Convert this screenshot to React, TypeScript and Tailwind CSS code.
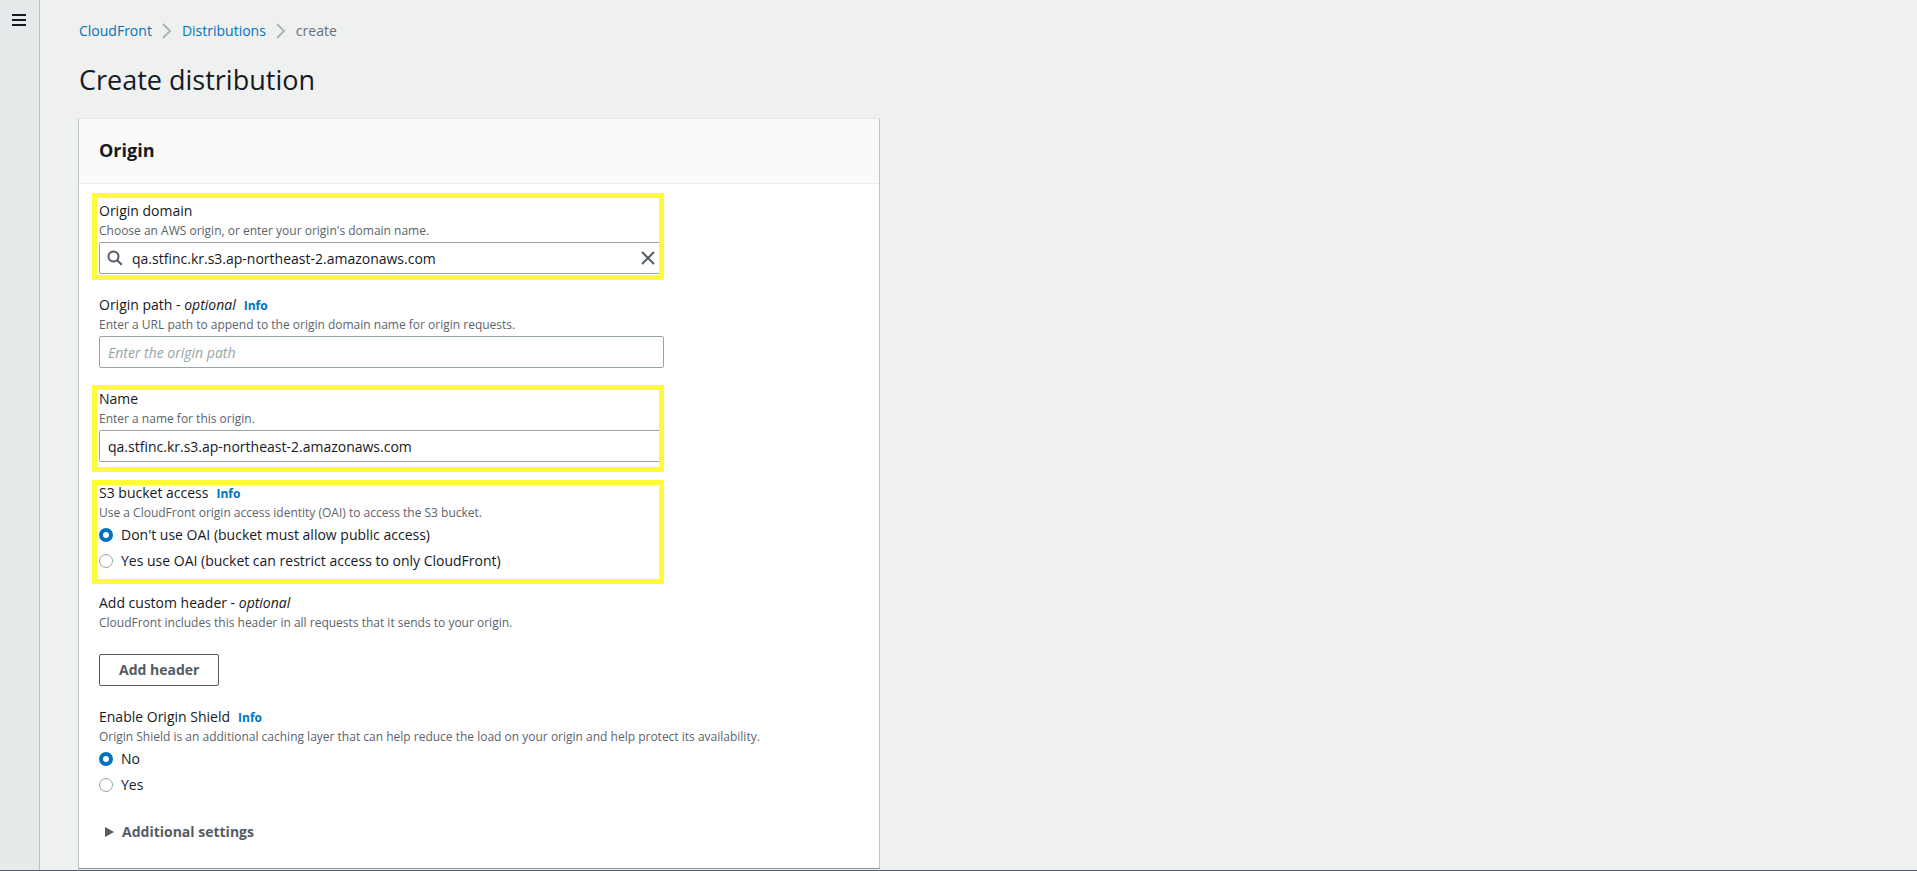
import { useState, type ReactNode } from "react";

function Chevron() {
  return (
    <svg className="h-4 w-3 shrink-0" viewBox="0 0 12 16" fill="none" stroke="#aab7b8" strokeWidth="2" aria-hidden="true">
      <path d="M2 1l7 7-7 7" />
    </svg>
  );
}

function Info() {
  return (
    <a href="#info" className="ml-2 text-xs font-bold text-[#0073bb]">
      Info
    </a>
  );
}

function Highlight({ inset }: { inset: string }) {
  return <div aria-hidden="true" className={`pointer-events-none absolute right-0 -left-[7px] border-[5px] border-[#fffb36] ${inset}`} />;
}

function Description({ children }: { children: ReactNode }) {
  return <p className="text-xs leading-[17px] -mb-px font-medium text-[#5c646c]">{children}</p>;
}

const inputClass =
  "h-8 w-full rounded-xs border border-[#95a5a6] bg-white px-2 text-sm font-medium text-[#16191f] outline-none placeholder:text-[#95a5a6] placeholder:italic focus:border-[#00a1c9]";

function RadioList({ name, options }: { name: string; options: string[] }) {
  return (
    <div className="mt-1 flex flex-col gap-1">
      {options.map((option, index) => (
        <label key={option} className="flex items-center gap-2 text-sm leading-[22px]">
          <input
            type="radio"
            name={name}
            defaultChecked={index === 0}
            className="size-[14px] shrink-0 appearance-none rounded-full border border-[#95a5a6] bg-white checked:border-4 checked:border-[#0073bb]"
          />
          {option}
        </label>
      ))}
    </div>
  );
}

export default function App() {
  const [domain, setDomain] = useState("qa.stfinc.kr.s3.ap-northeast-2.amazonaws.com");

  return (
    <div className="flex min-h-screen flex-col bg-[#eff1f1] font-['Open_Sans','Noto_Sans',sans-serif] text-sm font-medium text-[#16191f]">
      <div className="flex flex-1">
        <aside className="w-10 shrink-0 border-r border-[#bcc1c2] bg-[#e6eaeb]">
          <button type="button" aria-label="Open navigation" className="ml-3 mt-[13px] block">
            <svg className="h-[14px] w-[14px]" viewBox="0 0 14 14" fill="none" stroke="#16191f" strokeWidth="2" aria-hidden="true">
              <path d="M0 2h14M0 7h14M0 12h14" />
            </svg>
          </button>
        </aside>

        <main className="min-w-0 flex-1 px-[38px] pt-5">
          <nav aria-label="Breadcrumb" className="flex items-center gap-[9px] pl-px leading-[22px]">
            <a href="#cloudfront" className="text-[#0073bb]">CloudFront</a>
            <Chevron />
            <a href="#distributions" className="text-[#0073bb]">Distributions</a>
            <Chevron />
            <span className="text-[#687078]">create</span>
          </nav>

          <h1 className="mt-5 pl-px text-[27px] leading-9">Create distribution</h1>

          <section className="mt-5 max-w-[802px] border border-t-[#e3e7e7] border-r-[#bfc4c5] border-b-[#879596] border-l-[#bfc4c5] bg-white">
            <header className="border-b border-[#eaeded] bg-[#fafafa] px-5 pt-[19px] pb-[21px]">
              <h2 className="text-lg leading-6 font-bold">Origin</h2>
            </header>

            <div className="flex flex-col gap-5 px-5 pt-4 pb-[25px]">
              <div className="relative max-w-[565px]">
                <label htmlFor="origin-domain" className="block leading-[22px]">Origin domain</label>
                <Description>Choose an AWS origin, or enter your origin's domain name.</Description>
                <div className="relative mt-1">
                  <svg className="absolute top-2 left-2 size-4" viewBox="0 0 16 16" fill="none" stroke="#545b64" strokeWidth="2" aria-hidden="true">
                    <circle cx="6.5" cy="6.5" r="5" />
                    <path d="M10.2 10.2l4.6 4.6" />
                  </svg>
                  <input id="origin-domain" type="text" value={domain} onChange={(e) => setDomain(e.target.value)} className={`${inputClass} pr-8 pl-8`} />
                  <button type="button" aria-label="Clear" onClick={() => setDomain("")} className="absolute top-2 right-2">
                    <svg className="size-4" viewBox="0 0 16 16" fill="none" stroke="#545b64" strokeWidth="2" aria-hidden="true">
                      <path d="M2 2l12 12M14 2L2 14" />
                    </svg>
                  </button>
                </div>
                <Highlight inset="-top-[7px] -bottom-[6px]" />
              </div>

              <div className="max-w-[565px]">
                <div className="leading-[22px]">
                  <label htmlFor="origin-path">Origin path - <i>optional</i></label>
                  <Info />
                </div>
                <Description>Enter a URL path to append to the origin domain name for origin requests.</Description>
                <input id="origin-path" type="text" placeholder="Enter the origin path" className={`${inputClass} mt-1 block`} />
              </div>

              <div className="relative max-w-[565px]">
                <label htmlFor="origin-name" className="block leading-[22px]">Name</label>
                <Description>Enter a name for this origin.</Description>
                <input id="origin-name" type="text" defaultValue="qa.stfinc.kr.s3.ap-northeast-2.amazonaws.com" className={`${inputClass} mt-1 block`} />
                <Highlight inset="-top-[3px] -bottom-[10px]" />
              </div>

              <div role="radiogroup" aria-labelledby="bucket-access" className="relative max-w-[565px]">
                <div className="leading-[22px]">
                  <span id="bucket-access">S3 bucket access</span>
                  <Info />
                </div>
                <Description>Use a CloudFront origin access identity (OAI) to access the S3 bucket.</Description>
                <RadioList name="bucket-access" options={["Don't use OAI (bucket must allow public access)", "Yes use OAI (bucket can restrict access to only CloudFront)"]} />
                <Highlight inset="-top-[2px] -bottom-3" />
              </div>

              <div>
                <div className="leading-[22px]">Add custom header - <i>optional</i></div>
                <Description>CloudFront includes this header in all requests that it sends to your origin.</Description>
                <button type="button" className="mt-6 block h-8 rounded-xs border border-[#545b64] bg-white px-[19px] font-bold text-[#545b64]">
                  Add header
                </button>
              </div>

              <div role="radiogroup" aria-labelledby="origin-shield">
                <div className="leading-[22px]">
                  <span id="origin-shield">Enable Origin Shield</span>
                  <Info />
                </div>
                <Description>Origin Shield is an additional caching layer that can help reduce the load on your origin and help protect its availability.</Description>
                <RadioList name="origin-shield" options={["No", "Yes"]} />
              </div>

              <button type="button" aria-expanded="false" className="mt-[5px] flex items-center gap-2 self-start pl-[6px] leading-[22px] font-bold text-[#545b64]">
                <svg className="h-[10px] w-[9px]" viewBox="0 0 9 10" fill="#545b64" aria-hidden="true">
                  <path d="M0 0l9 5-9 5z" />
                </svg>
                Additional settings
              </button>
            </div>
          </section>
        </main>
      </div>
      <footer className="h-px bg-[#545b64]" />
    </div>
  );
}
